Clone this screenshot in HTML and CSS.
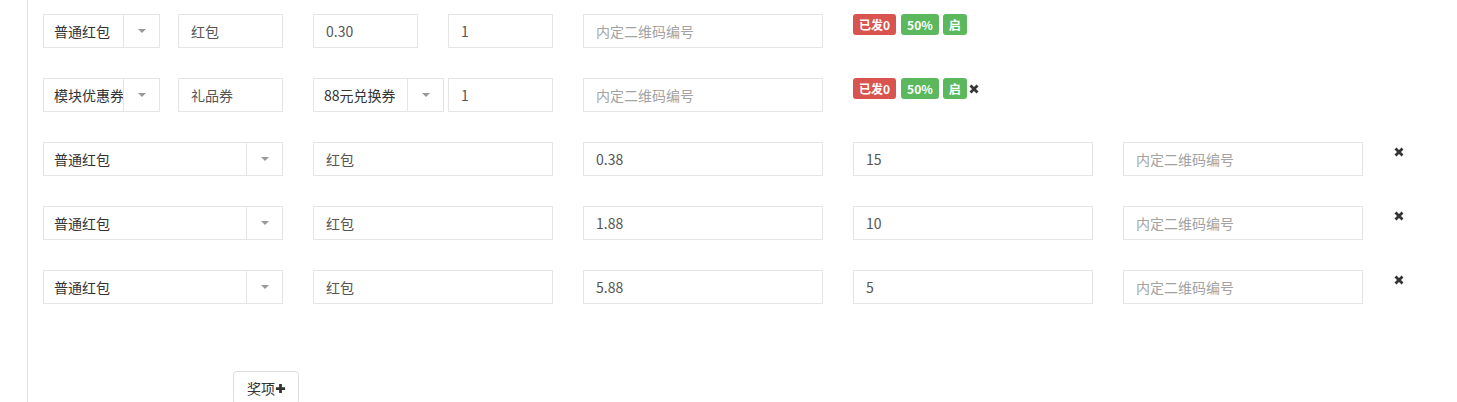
FILE: index.html
```html
<!DOCTYPE html>
<html lang="zh-CN">
<head>
  <meta charset="UTF-8" />
  <meta name="viewport" content="width=device-width, initial-scale=1.0" />
  <title>奖项设置</title>
  <link rel="stylesheet" href="styles.css">
</head>
<body>
  <div class="panel">
    <!-- 已发放的奖项 -->
    <div class="prize-row">
      <div class="select select-first"><span class="select-text">普通红包</span><span class="select-arrow"></span></div>
      <div class="field field-sm">红包</div>
      <div class="field field-sm">0.30</div>
      <div class="field field-sm">1</div>
      <div class="field field-lg placeholder">内定二维码编号</div>
      <div class="tags">
        <span class="tag tag-red">已发0</span>
        <span class="tag tag-green">50%</span>
        <span class="tag tag-green">启</span>
      </div>
    </div>

    <div class="prize-row">
      <div class="select select-first"><span class="select-text">模块优惠券</span><span class="select-arrow"></span></div>
      <div class="field field-sm">礼品券</div>
      <div class="cell-sm">
        <div class="select select-coupon"><span class="select-text">88元兑换券</span><span class="select-arrow"></span></div>
      </div>
      <div class="field field-sm">1</div>
      <div class="field field-lg placeholder">内定二维码编号</div>
      <div class="tags">
        <span class="tag tag-red">已发0</span>
        <span class="tag tag-green">50%</span>
        <span class="tag tag-green">启</span>
        <svg class="remove remove-inline" viewBox="0 0 10 10"><path d="M1.5 1.5 L8.5 8.5 M8.5 1.5 L1.5 8.5" /></svg>
      </div>
    </div>

    <!-- 新增的奖项 -->
    <div class="prize-row">
      <div class="select select-wide"><span class="select-text">普通红包</span><span class="select-arrow"></span></div>
      <div class="field field-lg">红包</div>
      <div class="field field-lg">0.38</div>
      <div class="field field-lg">15</div>
      <div class="field field-lg placeholder">内定二维码编号</div>
      <div class="remove-cell">
        <svg class="remove" viewBox="0 0 10 10"><path d="M1.5 1.5 L8.5 8.5 M8.5 1.5 L1.5 8.5" /></svg>
      </div>
    </div>

    <div class="prize-row">
      <div class="select select-wide"><span class="select-text">普通红包</span><span class="select-arrow"></span></div>
      <div class="field field-lg">红包</div>
      <div class="field field-lg">1.88</div>
      <div class="field field-lg">10</div>
      <div class="field field-lg placeholder">内定二维码编号</div>
      <div class="remove-cell">
        <svg class="remove" viewBox="0 0 10 10"><path d="M1.5 1.5 L8.5 8.5 M8.5 1.5 L1.5 8.5" /></svg>
      </div>
    </div>

    <div class="prize-row">
      <div class="select select-wide"><span class="select-text">普通红包</span><span class="select-arrow"></span></div>
      <div class="field field-lg">红包</div>
      <div class="field field-lg">5.88</div>
      <div class="field field-lg">5</div>
      <div class="field field-lg placeholder">内定二维码编号</div>
      <div class="remove-cell">
        <svg class="remove" viewBox="0 0 10 10"><path d="M1.5 1.5 L8.5 8.5 M8.5 1.5 L1.5 8.5" /></svg>
      </div>
    </div>

    <div class="actions">
      <button class="add-btn">奖项<svg class="plus" viewBox="0 0 12 12"><path d="M6 1 V11 M1 6 H11" /></svg></button>
    </div>
  </div>
</body>
</html>
```

FILE: styles.css
```css
html, body {
  overflow: hidden;
}
body {
  margin: 0;
  background: #fff;
  font-family: "Noto Sans CJK SC", "Noto Sans", sans-serif;
  font-size: 14px;
  color: #555;
}
.panel {
  margin-left: 27px;
  padding: 14px 0 0 15px;
  border-left: 1px solid #e5e5e5;
  min-height: 100vh;
  box-sizing: border-box;
}
.prize-row {
  display: flex;
  align-items: flex-start;
  gap: 30px;
  height: 34px;
  margin-bottom: 30px;
}
.field {
  height: 34px;
  box-sizing: border-box;
  border: 1px solid #e5e5e5;
  padding: 0 12px;
  display: flex;
  align-items: center;
  color: #555;
  white-space: nowrap;
  flex: none;
}
.field-sm {
  width: 105px;
}
.field-lg {
  width: 240px;
}
.placeholder {
  color: #a3a3a3;
}
.cell-sm {
  width: 105px;
  flex: none;
}
.select {
  height: 34px;
  box-sizing: border-box;
  border: 1px solid #e5e5e5;
  display: flex;
  align-items: stretch;
  color: #333;
  flex: none;
  background: #fff;
}
.select-text {
  flex: 1;
  min-width: 0;
  padding-left: 10px;
  display: flex;
  align-items: center;
  white-space: nowrap;
  overflow: hidden;
}
.select-arrow {
  width: 35px;
  flex: none;
  border-left: 1px solid #e5e5e5;
  display: flex;
  align-items: center;
  justify-content: center;
}
.select-arrow::after {
  content: "";
  border-left: 4px solid transparent;
  border-right: 4px solid transparent;
  border-top: 4px solid #999;
}
.select-first {
  width: 117px;
  margin-right: -12px;
}
.select-coupon {
  width: 131px;
}
.select-wide {
  width: 240px;
}
.tags {
  display: flex;
  align-items: center;
  gap: 4px;
  height: 21px;
}
.tag {
  display: inline-block;
  height: 21px;
  line-height: 21px;
  padding: 0 6px;
  border-radius: 3px;
  color: #fff;
  font-size: 12px;
  font-weight: bold;
}
.tag-red {
  background: #d9534f;
  margin-right: 1px;
}
.tag-green {
  background: #5cb85c;
}
.remove {
  display: block;
  width: 10px;
  height: 10px;
  stroke: #333;
  stroke-width: 2.8;
  fill: none;
}
.remove-inline {
  margin-left: -2px;
}
.remove-cell {
  padding: 5px 0 0 1px;
}
.actions {
  padding: 37px 0 0 190px;
}
.add-btn {
  height: 34px;
  padding: 0 12px 0 13px;
  border: 1px solid #ddd;
  border-radius: 4px;
  background: #fff;
  color: #333;
  font-family: inherit;
  font-size: 14px;
  display: flex;
  align-items: center;
}
.plus {
  width: 11px;
  height: 11px;
  stroke: #333;
  stroke-width: 3;
  fill: none;
}
```
